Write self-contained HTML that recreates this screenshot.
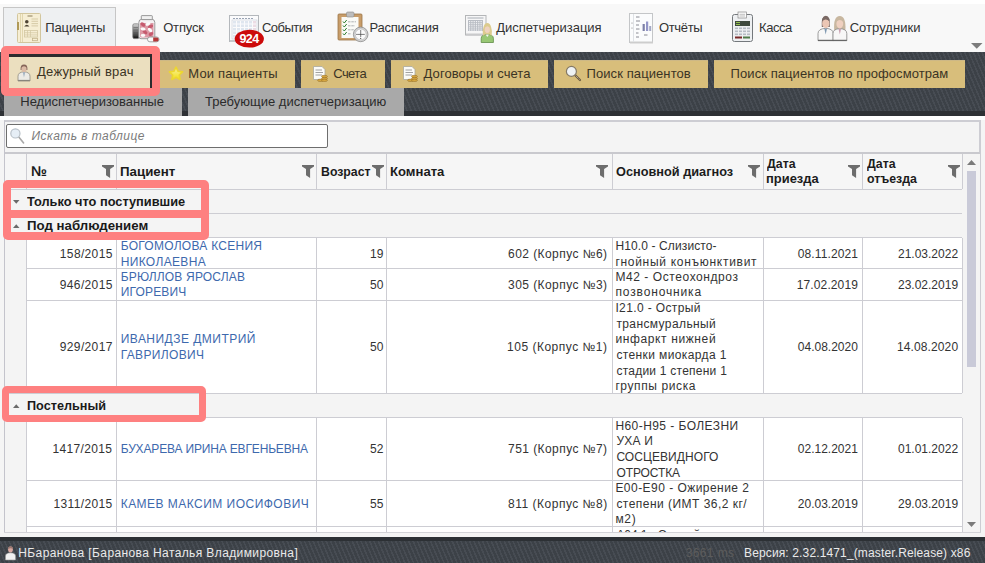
<!DOCTYPE html>
<html><head><meta charset="utf-8">
<style>
*{box-sizing:border-box;margin:0;padding:0}
html,body{width:985px;height:563px;overflow:hidden;background:#fff;font-family:"Liberation Sans",sans-serif;color:#333}
.a{position:absolute}
.t{position:absolute;white-space:nowrap;font-family:"Liberation Sans",sans-serif}
.stripes{background:repeating-linear-gradient(67deg,#474c53 0px,#474c53 1.6px,#3c4147 1.6px,#3c4147 4px)}
.btn{position:absolute;top:60px;height:28px;background:#d8be7b;border-top:1px solid #cdb886}
.gt{position:absolute;top:88px;height:28px;background:#a9a9a9}
.hl{position:absolute;height:1px;background:#cdcdd3}
.vl{position:absolute;width:1px;background:#cdcdd3}
.pink{position:absolute;border:8px solid #fe8080;border-radius:5px}
.fun{position:absolute}
</style></head><body>
<svg width="0" height="0" style="position:absolute">
<defs>
<symbol id="funnel" viewBox="0 0 13 14"><path d="M0,0H12V1.6L8.1,4.1V13.1L4,10.2V4.1L0,1.6Z" fill="#6d6d6d"/></symbol>
<linearGradient id="capg" x1="0" y1="0" x2="0" y2="1"><stop offset="0" stop-color="#d8d8d8"/><stop offset="1" stop-color="#111"/></linearGradient>
<linearGradient id="stardg" x1="0" y1="0" x2="0" y2="1"><stop offset="0" stop-color="#f8f0a0"/><stop offset="1" stop-color="#f2e018"/></linearGradient>
</defs>
</svg>

<!-- ============ TOP TOOLBAR ============ -->
<div class="a" style="left:0;top:0;width:985px;height:52px;background:#f8f8f8;border-top:4px solid #fff"></div>
<div class="a" style="left:3px;top:7px;width:113px;height:45px;background:#eef0f2;border:1px solid #c6c6c6;border-bottom:none"></div>

<!-- patients icon -->
<svg class="a" style="left:17px;top:13px" width="24" height="30" viewBox="0 0 24 30">
<rect x="0.5" y="0.5" width="23" height="29" rx="1" fill="#f6eed4" stroke="#d2c69e"/>
<path d="M3.5 1V29M5.5 1V29" stroke="#dccfa4" stroke-width="0.8"/>
<rect x="0" y="9" width="2" height="8" fill="#b09a58"/>
<rect x="10.5" y="2.5" width="5" height="1" fill="#8a7c5a"/>
<circle cx="9.8" cy="8.8" r="1.8" fill="#4e4434"/>
<path d="M7.2 13.6Q9.8 9.8 12.4 13.6Z" fill="#4e4434"/>
<path d="M14.5 6H21M14.5 8.3H21M14.5 10.6H21M14.5 12.9H21" stroke="#c9bb94" stroke-width="0.7"/>
<rect x="7.5" y="17.5" width="13" height="6.5" fill="none" stroke="#d3c7a2" stroke-width="0.8"/>
<path d="M7.5 19.7H20.5M7.5 21.9H20.5M10.5 17.5V24M13.5 17.5V24" stroke="#d3c7a2" stroke-width="0.7"/>
<rect x="15.5" y="25.3" width="5" height="2.4" fill="none" stroke="#c2b48c" stroke-width="0.8"/>
</svg>

<!-- pills icon -->
<svg class="a" style="left:132px;top:15px" width="28" height="28" viewBox="0 0 28 28">
<rect x="0.8" y="8.8" width="6.2" height="14.8" rx="1.5" fill="url(#capg)" stroke="#777" stroke-width="0.7"/>
<path d="M1.5 12.5H6.3M1.5 15H6.3M1.5 17.5H6.3M1.5 20H6.3" stroke="#555" stroke-width="0.5"/>
<path d="M6.8 7.5Q6.8 4.2 10 4.2H19.5Q22.8 4.2 22.8 7.5V21.5Q22.8 23.7 20.5 23.7H9Q6.8 23.7 6.8 21.5Z" fill="#f5f0f2" stroke="#8e8e8e" stroke-width="0.9"/>
<rect x="9.3" y="0.6" width="11" height="4" rx="0.6" fill="#f0f0f0" stroke="#8e8e8e" stroke-width="0.9"/>
<path d="M8 8H21.5V21Q21.5 22.5 20 22.5H9.5Q8 22.5 8 21Z" fill="#dc9aa6"/>
<g fill="#c65a6e"><ellipse cx="11" cy="9.5" rx="2.8" ry="1.7" transform="rotate(35 11 9.5)"/><ellipse cx="18.5" cy="11.5" rx="2.8" ry="1.7" transform="rotate(-25 18.5 11.5)"/><ellipse cx="13" cy="17" rx="2.8" ry="1.7" transform="rotate(40 13 17)"/><ellipse cx="19" cy="19" rx="2.5" ry="1.6" transform="rotate(-30 19 19)"/></g>
<g fill="#fbfbfb"><ellipse cx="16" cy="9" rx="2.6" ry="1.5" transform="rotate(-20 16 9)"/><ellipse cx="11" cy="14" rx="2.6" ry="1.5" transform="rotate(10 11 14)"/><ellipse cx="18" cy="15" rx="2.6" ry="1.5" transform="rotate(40 18 15)"/><ellipse cx="11" cy="20.5" rx="2.3" ry="1.4"/></g>
<rect x="15.5" y="22" width="11.5" height="4.8" rx="2.4" fill="#fafafa" stroke="#8c8c8c" stroke-width="0.8"/>
<path d="M21.2 22.4H24.6A2 2 0 0 1 24.6 26.4H21.2Z" fill="#b23838"/>
</svg>

<!-- events calendar + badge -->
<svg class="a" style="left:229px;top:15px" width="36" height="33" viewBox="0 0 36 33">
<rect x="0.5" y="0.5" width="29" height="26" fill="#fbfbfc" stroke="#b4b8bc"/>
<rect x="1" y="25" width="28" height="2" fill="#c6c8ca"/>
<path d="M4 3.5H25" stroke="#9aa4b4" stroke-width="1" stroke-dasharray="2 1"/>
<g fill="#dfe6ef">
<rect x="4" y="6" width="3" height="2.5"/><rect x="8" y="6" width="3" height="2.5"/><rect x="12" y="6" width="3" height="2.5"/><rect x="16" y="6" width="3" height="2.5"/><rect x="20" y="6" width="3" height="2.5"/><rect x="24" y="6" width="3" height="2.5" fill="#ecdce4"/>
<rect x="4" y="9.5" width="3" height="2.5"/><rect x="8" y="9.5" width="3" height="2.5"/><rect x="12" y="9.5" width="3" height="2.5"/><rect x="16" y="9.5" width="3" height="2.5"/><rect x="20" y="9.5" width="3" height="2.5"/><rect x="24" y="9.5" width="3" height="2.5" fill="#ecdce4"/>
<rect x="4" y="13" width="3" height="2.5"/><rect x="8" y="13" width="3" height="2.5"/><rect x="12" y="13" width="3" height="2.5"/><rect x="16" y="13" width="3" height="2.5"/><rect x="20" y="13" width="3" height="2.5"/><rect x="24" y="13" width="3" height="2.5" fill="#ecdce4"/>
<rect x="4" y="16.5" width="3" height="2.5"/><rect x="8" y="16.5" width="3" height="2.5"/>
<rect x="4" y="20" width="3" height="2.5"/>
</g>
<rect x="3" y="5" width="25" height="19" fill="none" stroke="#c7ced8" stroke-width="0.6"/>
<ellipse cx="20.3" cy="23.7" rx="14.6" ry="8.9" fill="#cc0a0a"/>
</svg>
<div class="t" style="left:239.5px;top:33px;font-size:12.5px;line-height:13px;color:#fff;font-weight:bold;letter-spacing:-0.6px">924</div>

<!-- schedule clipboard -->
<svg class="a" style="left:337px;top:11px" width="33" height="32" viewBox="0 0 33 32">
<rect x="1" y="3" width="24" height="26" rx="1" fill="#c89d6a" stroke="#9a7448" stroke-width="0.8"/>
<rect x="4.5" y="6" width="17" height="21" fill="#fafaf6"/>
<rect x="9.5" y="1" width="7.5" height="5" rx="1.2" fill="#bdbdbd" stroke="#8a8a8a" stroke-width="0.6"/>
<path d="M6 10.5l1.3 1.5 2.4-3M6 14.5l1.3 1.5 2.4-3M6 18.5l1.3 1.5 2.4-3M6 22.5l1.3 1.5 2.4-3" stroke="#2e7d2e" stroke-width="1" fill="none"/>
<path d="M11 10.8H19M11 14.8H18M11 18.8H17M11 22.8H14" stroke="#8e9296" stroke-width="0.7" stroke-dasharray="2.5 0.8"/>
<circle cx="23.7" cy="23.4" r="7.3" fill="#d2d2d2" stroke="#8c8c8c" stroke-width="0.8"/>
<circle cx="23.7" cy="23.4" r="5.4" fill="#fbfbfb" stroke="#aaa" stroke-width="0.5"/>
<path d="M23.7 19V26M21 23.4H27.8" stroke="#444" stroke-width="0.7" fill="none"/><circle cx="20" cy="23.4" r="0.6" fill="#333"/><circle cx="23.7" cy="27.3" r="0.6" fill="#333"/>
</svg>

<!-- dispatch -->
<svg class="a" style="left:464px;top:14px" width="31" height="30" viewBox="0 0 31 30">
<rect x="1.5" y="1.5" width="20.5" height="19.5" fill="#f6f6f7" stroke="#b4b6b8"/>
<rect x="2" y="19.5" width="20" height="2" fill="#c9cacc"/>
<rect x="3.5" y="3" width="16" height="2" fill="#cfd2d6"/>
<rect x="4" y="6" width="15" height="11" fill="#b9bdc4"/>
<g fill="#f4f5f7"><rect x="5.0" y="7.0" width="1.2" height="1.2"/><rect x="7.3" y="7.0" width="1.2" height="1.2"/><rect x="9.6" y="7.0" width="1.2" height="1.2"/><rect x="11.9" y="7.0" width="1.2" height="1.2"/><rect x="14.2" y="7.0" width="1.2" height="1.2"/><rect x="16.5" y="7.0" width="1.2" height="1.2"/><rect x="5.0" y="9.1" width="1.2" height="1.2"/><rect x="7.3" y="9.1" width="1.2" height="1.2"/><rect x="9.6" y="9.1" width="1.2" height="1.2"/><rect x="11.9" y="9.1" width="1.2" height="1.2"/><rect x="14.2" y="9.1" width="1.2" height="1.2"/><rect x="16.5" y="9.1" width="1.2" height="1.2"/><rect x="5.0" y="11.2" width="1.2" height="1.2"/><rect x="7.3" y="11.2" width="1.2" height="1.2"/><rect x="9.6" y="11.2" width="1.2" height="1.2"/><rect x="11.9" y="11.2" width="1.2" height="1.2"/><rect x="14.2" y="11.2" width="1.2" height="1.2"/><rect x="16.5" y="11.2" width="1.2" height="1.2"/><rect x="5.0" y="13.3" width="1.2" height="1.2"/><rect x="7.3" y="13.3" width="1.2" height="1.2"/><rect x="9.6" y="13.3" width="1.2" height="1.2"/><rect x="11.9" y="13.3" width="1.2" height="1.2"/><rect x="14.2" y="13.3" width="1.2" height="1.2"/><rect x="16.5" y="13.3" width="1.2" height="1.2"/><rect x="5.0" y="15.4" width="1.2" height="1.2"/><rect x="7.3" y="15.4" width="1.2" height="1.2"/><rect x="9.6" y="15.4" width="1.2" height="1.2"/><rect x="11.9" y="15.4" width="1.2" height="1.2"/><rect x="14.2" y="15.4" width="1.2" height="1.2"/><rect x="16.5" y="15.4" width="1.2" height="1.2"/></g>
<path d="M17.2 28.5V24.5Q17.2 20.5 23.3 20.3Q29.4 20.5 29.4 24.5V28.5Z" fill="#98c774" stroke="#5f8c48" stroke-width="0.8"/>
<path d="M21.6 20.5L23.3 23L25 20.5Z" fill="#f4f4f0"/>
<path d="M19 22Q18 17 19.5 13Q20.5 9 23.3 9Q26.1 9 27.1 13Q28.6 17 27.6 22Q26 20 23.3 20Q20.6 20 19 22Z" fill="#dccb8e"/>
<ellipse cx="23.3" cy="15.6" rx="2.6" ry="3.4" fill="#efd2be"/>
<path d="M20.6 13.5Q23.3 10.5 26 13.5Q25.5 10.2 23.3 10.2Q21.1 10.2 20.6 13.5Z" fill="#dccb8e"/>
</svg>

<!-- reports -->
<svg class="a" style="left:629px;top:13px" width="24" height="31" viewBox="0 0 24 31">
<rect x="0.5" y="0.5" width="23" height="29" fill="#fbfcfd" stroke="#c4c6c8"/>
<rect x="1" y="28.5" width="23" height="2" fill="#cdcdcd"/>
<path d="M4.5 1V29" stroke="#dfe2e6"/>
<path d="M7 4H10.5M7 8H11M7 12H10M7 16H10.5M7 20H9.5M7 24H10M15 22H18.5" stroke="#6f7078" stroke-width="0.8"/>
<circle cx="3" cy="10" r="0.5" fill="#666"/><circle cx="3" cy="15" r="0.5" fill="#666"/>
<rect x="13.6" y="11" width="2.2" height="7" fill="#7d80a8"/>
<rect x="17" y="8.5" width="2.2" height="9.5" fill="#9396c8"/>
<rect x="20.2" y="13" width="2" height="5" fill="#a4a8c4"/>
</svg>

<!-- cash register -->
<svg class="a" style="left:731px;top:11px" width="23" height="32" viewBox="0 0 23 32">
<rect x="1.5" y="3.5" width="20" height="27" rx="2" fill="#eef0f2" stroke="#74787c"/>
<rect x="7" y="1" width="8.5" height="6" fill="#fbfbfb" stroke="#888" stroke-width="0.7"/>
<path d="M8.5 3.3H14M8.5 5H14" stroke="#999" stroke-width="0.6"/>
<rect x="4" y="10" width="15" height="5" fill="#3f4a3e"/>
<path d="M5 11.5H9M5 13.5H9" stroke="#9ccc50" stroke-width="0.9"/>
<g fill="#b6bcc4"><rect x="4" y="16.5" width="3" height="1.6"/><rect x="8" y="16.5" width="3" height="1.6"/><rect x="12" y="16.5" width="3" height="1.6"/><rect x="16" y="16.5" width="3" height="1.6"/>
<rect x="4" y="19.5" width="3" height="1.6"/><rect x="8" y="19.5" width="3" height="1.6"/><rect x="12" y="19.5" width="3" height="1.6"/><rect x="16" y="19.5" width="3" height="1.6"/>
<rect x="4" y="22.5" width="3" height="1.6"/><rect x="8" y="22.5" width="3" height="1.6"/><rect x="12" y="22.5" width="3" height="1.6"/><rect x="16" y="22.5" width="3" height="1.6"/></g>
<rect x="4" y="25.5" width="7" height="2" fill="#7a2a2a"/>
<rect x="12" y="25.5" width="7" height="2" fill="#4f7a4a"/>
</svg>

<!-- staff -->
<svg class="a" style="left:817px;top:15px" width="31" height="27" viewBox="0 0 31 27">
<path d="M17.2 15.5Q16.2 1 22.7 1Q29.2 1 28.4 15.5Z" fill="#c8b7a0"/>
<path d="M1 25.7V18.5Q1 13.8 8.8 13.3Q16.2 13.8 16.2 18.5V25.7Z" fill="#f7f7f7" stroke="#858585" stroke-width="0.8"/>
<path d="M16 25.7V18.5Q16 14 22.8 13.6Q29.8 14 29.8 18.5V25.7Z" fill="#f7f7f7" stroke="#858585" stroke-width="0.8"/>
<path d="M1 25.3H29.8" stroke="#555" stroke-width="1"/>
<path d="M7.3 13.6L8.7 19.5L10 13.6Z" fill="#7d97b0"/>
<path d="M21.5 13.8L22.8 19.5L24.1 13.8Z" fill="#c9a0b0"/>
<path d="M4.8 12Q4 0.8 8.8 0.8Q13.6 0.8 12.8 12Z" fill="#7a6964"/>
<ellipse cx="8.8" cy="8.4" rx="3.6" ry="4.9" fill="#ebc6b4"/>
<path d="M5.2 6.2Q8.8 2.8 12.4 6.2Q12.4 1.6 8.8 1.6Q5.2 1.6 5.2 6.2Z" fill="#7a6964"/>
<ellipse cx="22.8" cy="8.7" rx="3.4" ry="4.8" fill="#efd0c0"/>
<path d="M19.2 7Q22.8 3.2 26.4 7Q26.4 1.8 22.8 1.8Q19.2 1.8 19.2 7Z" fill="#c8b7a0"/>
</svg>
<div class="a" style="left:0;top:42px;width:985px;height:0"></div>
<svg class="a" style="left:971px;top:43px" width="12" height="6" viewBox="0 0 12 6"><path d="M0,0H11.5L5.75,5.8Z" fill="#7c7c7c"/></svg>

<!-- ============ DARK BAR ============ -->
<div class="a stripes" style="left:0;top:52px;width:985px;height:64px"></div>
<div class="a" style="left:0;top:111px;width:985px;height:5px;background:#2e3135"></div>

<div class="a" style="left:9px;top:54px;width:143px;height:34px;background:#2b2c2e"></div>
<div class="a" style="left:9px;top:57px;width:141px;height:31px;background:#ebdfbf"></div>
<div class="btn" style="left:156px;width:139px"></div>
<div class="btn" style="left:301px;width:84px"></div>
<div class="btn" style="left:391px;width:157px"></div>
<div class="btn" style="left:554px;width:154px"></div>
<div class="btn" style="left:714px;width:251px"></div>

<!-- doctor icon -->
<svg class="a" style="left:17px;top:64px" width="14" height="18" viewBox="0 0 14 18">
<path d="M1 17V12.2Q1 8.2 7 7.8Q13 8.2 13 12.2V17Z" fill="#ecebe6" stroke="#8f8c82" stroke-width="0.8"/>
<path d="M1.2 16.4H12.8" stroke="#77746c" stroke-width="0.9"/>
<path d="M6.1 8.2L7 13.5L7.9 8.2Z" fill="#8aa0b8"/>
<path d="M3.6 6Q3.2 0.6 7 0.6Q10.8 0.6 10.4 6Z" fill="#86665a"/>
<ellipse cx="7" cy="5" rx="2.6" ry="3.1" fill="#dcbba6"/>
<path d="M4 3.6Q7 0.9 10 3.6Q9.8 1.1 7 1.1Q4.2 1.1 4 3.6Z" fill="#86665a"/>
</svg>
<!-- star -->
<svg class="a" style="left:168px;top:66px" width="16" height="15" viewBox="0 0 16 15">
<path d="M8 1.2L10.1 5.3L14.6 5.9L11.3 9L12.1 13.5L8 11.4L3.9 13.5L4.7 9L1.4 5.9L5.9 5.3Z" fill="url(#stardg)" stroke="#ecd630" stroke-width="1.6" stroke-linejoin="round"/>
</svg>
<!-- doc + coins icons -->
<svg class="a" style="left:313px;top:66px" width="15" height="16" viewBox="0 0 15 16">
<path d="M0.5 0.5H9L12 3.5V13.5H0.5Z" fill="#fbfbf8" stroke="#a8a8a0" stroke-width="0.8"/>
<path d="M2.5 4H9M2.5 6.5H10M2.5 9H9" stroke="#8c8c8c" stroke-width="0.8"/>
<g fill="#d9a840" stroke="#8a6420" stroke-width="0.5"><ellipse cx="11.5" cy="10.5" rx="3" ry="1.2"/><ellipse cx="11.5" cy="12.5" rx="3" ry="1.2"/><ellipse cx="7.5" cy="14.3" rx="3" ry="1.2"/><ellipse cx="11.5" cy="14.3" rx="3" ry="1.2"/></g>
</svg>
<svg class="a" style="left:403px;top:66px" width="15" height="16" viewBox="0 0 15 16">
<path d="M0.5 0.5H9L12 3.5V13.5H0.5Z" fill="#fbfbf8" stroke="#a8a8a0" stroke-width="0.8"/>
<path d="M2.5 4H9M2.5 6.5H10M2.5 9H9" stroke="#8c8c8c" stroke-width="0.8"/>
<g fill="#d9a840" stroke="#8a6420" stroke-width="0.5"><ellipse cx="11.5" cy="10.5" rx="3" ry="1.2"/><ellipse cx="11.5" cy="12.5" rx="3" ry="1.2"/><ellipse cx="7.5" cy="14.3" rx="3" ry="1.2"/><ellipse cx="11.5" cy="14.3" rx="3" ry="1.2"/></g>
</svg>
<!-- magnifier -->
<svg class="a" style="left:565px;top:65px" width="18" height="18" viewBox="0 0 18 18">
<path d="M9.5 9.5L15 15" stroke="#6a5a40" stroke-width="2.2" stroke-linecap="round"/>
<path d="M9.5 9.5L15 15" stroke="#e8e0d0" stroke-width="0.8" stroke-dasharray="1 1"/>
<circle cx="6.4" cy="6.4" r="5" fill="#eef2f4" stroke="#857a66" stroke-width="1.2"/>
</svg>

<div class="gt" style="left:4px;width:178px"></div>
<div class="gt" style="left:188px;width:216px"></div>

<!-- ============ PANEL ============ -->
<div class="a" style="left:0;top:120px;width:985px;height:417px;background:#f5f5f5"></div>
<div class="a" style="left:4px;top:120px;width:977px;height:413px;background:#f4f4f4;border:1px solid #c4c4cc;border-top:2px solid #cdcdd3;border-right:2px solid #cdcdd3"></div>
<div class="a" style="left:6px;top:124px;width:322px;height:24px;background:#fff;border:1px solid #6e6e6e;border-radius:2px"></div>
<svg class="a" style="left:9px;top:127px" width="17" height="18" viewBox="0 0 17 18">
<path d="M9.8 10L14.6 16" stroke="#a9a9a9" stroke-width="1.6" stroke-linecap="round"/>
<circle cx="6.4" cy="6.4" r="4.6" fill="#e6eef6" stroke="#b8c0c8" stroke-width="1.2"/>
</svg>

<!-- header -->
<div class="a" style="left:5px;top:152px;width:975px;height:2px;background:#c9c9ce"></div>
<div class="a" style="left:5px;top:154px;width:957px;height:35px;background:#f6f6f6"></div>
<div class="hl" style="left:5px;top:189px;width:957px"></div>
<!-- group rows -->
<div class="a" style="left:5px;top:190px;width:957px;height:47px;background:#f4f4f4"></div>
<div class="hl" style="left:5px;top:213px;width:957px"></div>
<div class="hl" style="left:5px;top:237px;width:957px"></div>
<!-- data block 1 -->
<div class="a" style="left:27px;top:238px;width:935px;height:155px;background:#fff"></div>
<div class="hl" style="left:26px;top:268px;width:936px"></div>
<div class="hl" style="left:26px;top:300px;width:936px"></div>
<div class="hl" style="left:5px;top:393px;width:957px"></div>
<div class="hl" style="left:5px;top:417px;width:957px"></div>
<!-- data block 2 -->
<div class="a" style="left:27px;top:418px;width:935px;height:114px;background:#fff"></div>
<div class="hl" style="left:26px;top:480px;width:936px"></div>
<div class="hl" style="left:26px;top:526px;width:936px"></div>

<!-- vertical lines: header -->
<div class="vl" style="left:26px;top:154px;height:35px"></div>
<div class="vl" style="left:116px;top:154px;height:35px"></div>
<div class="vl" style="left:316px;top:154px;height:35px"></div>
<div class="vl" style="left:386px;top:154px;height:35px"></div>
<div class="vl" style="left:612px;top:154px;height:35px"></div>
<div class="vl" style="left:763px;top:154px;height:35px"></div>
<div class="vl" style="left:862px;top:154px;height:35px"></div>
<div class="vl" style="left:962px;top:154px;height:35px"></div><div class="vl" style="left:962px;top:238px;height:155px"></div><div class="vl" style="left:962px;top:418px;height:114px"></div>
<!-- vertical lines: block1 -->
<div class="vl" style="left:26px;top:238px;height:155px"></div>
<div class="vl" style="left:116px;top:238px;height:155px"></div>
<div class="vl" style="left:316px;top:238px;height:155px"></div>
<div class="vl" style="left:386px;top:238px;height:155px"></div>
<div class="vl" style="left:612px;top:238px;height:155px"></div>
<div class="vl" style="left:763px;top:238px;height:155px"></div>
<div class="vl" style="left:862px;top:238px;height:155px"></div>
<!-- vertical lines: block2 -->
<div class="vl" style="left:26px;top:418px;height:114px"></div>
<div class="vl" style="left:116px;top:418px;height:114px"></div>
<div class="vl" style="left:316px;top:418px;height:114px"></div>
<div class="vl" style="left:386px;top:418px;height:114px"></div>
<div class="vl" style="left:612px;top:418px;height:114px"></div>
<div class="vl" style="left:763px;top:418px;height:114px"></div>
<div class="vl" style="left:862px;top:418px;height:114px"></div>

<!-- funnels -->
<svg class="fun" style="left:102px;top:165px" width="13" height="14"><use href="#funnel"/></svg>
<svg class="fun" style="left:302px;top:165px" width="13" height="14"><use href="#funnel"/></svg>
<svg class="fun" style="left:371.5px;top:165px" width="13" height="14"><use href="#funnel"/></svg>
<svg class="fun" style="left:596px;top:165px" width="13" height="14"><use href="#funnel"/></svg>
<svg class="fun" style="left:748px;top:165px" width="13" height="14"><use href="#funnel"/></svg>
<svg class="fun" style="left:848px;top:165px" width="13" height="14"><use href="#funnel"/></svg>
<svg class="fun" style="left:948px;top:165px" width="13" height="14"><use href="#funnel"/></svg>

<!-- group triangles -->
<svg class="a" style="left:13px;top:200px" width="7" height="4"><path d="M0,0H6.5L3.25,3.8Z" fill="#6a6a6a"/></svg>
<svg class="a" style="left:13px;top:224px" width="7" height="4"><path d="M0,4H6.5L3.25,0.2Z" fill="#6a6a6a"/></svg>
<svg class="a" style="left:13px;top:404px" width="7" height="4"><path d="M0,4H6.5L3.25,0.2Z" fill="#6a6a6a"/></svg>

<!-- scrollbar -->
<div class="a" style="left:963px;top:154px;width:17px;height:378px;background:#f4f4f4"></div>
<svg class="a" style="left:967px;top:160px" width="9" height="5"><path d="M0,5H9L4.5,0Z" fill="#7a7a7a"/></svg>
<div class="a" style="left:967px;top:171px;width:9px;height:196px;background:#c9cad8"></div>
<svg class="a" style="left:967px;top:522px" width="9" height="5"><path d="M0,0H9L4.5,5Z" fill="#7a7a7a"/></svg>

<div class="t" style="left:45.30px;top:21px;font-size:13px;line-height:13px;color:#333;letter-spacing:-0.143px">Пациенты</div>
<div class="t" style="left:163.20px;top:21px;font-size:13px;line-height:13px;color:#333;letter-spacing:-0.180px">Отпуск</div>
<div class="t" style="left:261.90px;top:21px;font-size:13px;line-height:13px;color:#333;letter-spacing:-0.483px">События</div>
<div class="t" style="left:369.60px;top:21px;font-size:13px;line-height:13px;color:#333;letter-spacing:-0.256px">Расписания</div>
<div class="t" style="left:496.30px;top:21px;font-size:13px;line-height:13px;color:#333;letter-spacing:-0.036px">Диспетчеризация</div>
<div class="t" style="left:658.90px;top:21px;font-size:13px;line-height:13px;color:#333;letter-spacing:-0.320px">Отчёты</div>
<div class="t" style="left:759.00px;top:21px;font-size:13px;line-height:13px;color:#333;letter-spacing:-0.425px">Касса</div>
<div class="t" style="left:849.70px;top:21px;font-size:13px;line-height:13px;color:#333;letter-spacing:0.044px">Сотрудники</div>
<div class="t" style="left:37.00px;top:65px;font-size:13px;line-height:13px;color:#3b3424;letter-spacing:0.250px">Дежурный врач</div>
<div class="t" style="left:188.30px;top:67px;font-size:13px;line-height:13px;color:#3b3424;letter-spacing:0.145px">Мои пациенты</div>
<div class="t" style="left:333.20px;top:67px;font-size:13px;line-height:13px;color:#3b3424;letter-spacing:-0.550px">Счета</div>
<div class="t" style="left:423.60px;top:67px;font-size:13px;line-height:13px;color:#3b3424;letter-spacing:0.067px">Договоры и счета</div>
<div class="t" style="left:586.50px;top:67px;font-size:13px;line-height:13px;color:#3b3424;letter-spacing:0.093px">Поиск пациентов</div>
<div class="t" style="left:730.60px;top:67px;font-size:13px;line-height:13px;color:#3b3424;letter-spacing:0.067px">Поиск пациентов по профосмотрам</div>
<div class="t" style="left:20.30px;top:95px;font-size:13px;line-height:13px;color:#2b2b2b;letter-spacing:-0.016px">Недиспетчеризованные</div>
<div class="t" style="left:205.00px;top:95px;font-size:13px;line-height:13px;color:#2b2b2b;letter-spacing:0.013px">Требующие диспетчеризацию</div>
<div class="t" style="left:31.60px;top:130px;font-size:12px;line-height:12px;color:#7b7b7b;font-style:italic;letter-spacing:0.440px">Искать в таблице</div>
<div class="t" style="left:30.68px;top:164px;font-size:14px;line-height:14px;color:#1c1c1c;font-weight:700;transform:scaleX(1.0214);transform-origin:0 0">№</div>
<div class="t" style="left:120.31px;top:165px;font-size:13.5px;line-height:13.5px;color:#1c1c1c;font-weight:700;transform:scaleX(0.9855);transform-origin:0 0">Пациент</div>
<div class="t" style="left:320.99px;top:165px;font-size:13.5px;line-height:13.5px;color:#1c1c1c;font-weight:700;transform:scaleX(0.9113);transform-origin:0 0">Возраст</div>
<div class="t" style="left:390.23px;top:165px;font-size:13.5px;line-height:13.5px;color:#1c1c1c;font-weight:700;transform:scaleX(0.9691);transform-origin:0 0">Комната</div>
<div class="t" style="left:616.40px;top:165px;font-size:13.5px;line-height:13.5px;color:#1c1c1c;font-weight:700;transform:scaleX(0.9435);transform-origin:0 0">Основной диагноз</div>
<div class="t" style="left:767.30px;top:157px;font-size:13.5px;line-height:13.5px;color:#1c1c1c;font-weight:700;transform:scaleX(0.9125);transform-origin:0 0">Дата</div>
<div class="t" style="left:766.34px;top:172px;font-size:13.5px;line-height:13.5px;color:#1c1c1c;font-weight:700;transform:scaleX(0.9574);transform-origin:0 0">приезда</div>
<div class="t" style="left:867.30px;top:157px;font-size:13.5px;line-height:13.5px;color:#1c1c1c;font-weight:700;transform:scaleX(0.9125);transform-origin:0 0">Дата</div>
<div class="t" style="left:867.30px;top:172px;font-size:13.5px;line-height:13.5px;color:#1c1c1c;font-weight:700;transform:scaleX(0.9127);transform-origin:0 0">отъезда</div>
<div class="t" style="left:27.00px;top:195px;font-size:13px;line-height:13px;color:#1a1a1a;font-weight:700;transform:scaleX(0.9832);transform-origin:0 0">Только что поступившие</div>
<div class="t" style="left:26.68px;top:219px;font-size:13px;line-height:13px;color:#1a1a1a;font-weight:700;transform:scaleX(1.0188);transform-origin:0 0">Под наблюдением</div>
<div class="t" style="left:26.83px;top:399px;font-size:13px;line-height:13px;color:#1a1a1a;font-weight:700;transform:scaleX(0.9738);transform-origin:0 0">Постельный</div>
<div class="t" style="left:59.85px;top:248px;font-size:12px;line-height:12px;color:#333;letter-spacing:0.350px">158/2015</div>
<div class="t" style="left:120.70px;top:240px;font-size:12px;line-height:12px;color:#3d69ad;letter-spacing:0.262px">БОГОМОЛОВА КСЕНИЯ</div>
<div class="t" style="left:120.70px;top:256px;font-size:12px;line-height:12px;color:#3d69ad;letter-spacing:0.344px">НИКОЛАЕВНА</div>
<div class="t" style="left:370.00px;top:248px;font-size:12px;line-height:12px;color:#333">19</div>
<div class="t" style="left:508.10px;top:248px;font-size:12px;line-height:12px;color:#333;letter-spacing:0.429px">602 (Корпус №6)</div>
<div class="t" style="left:615.40px;top:240px;font-size:12px;line-height:12px;color:#333;letter-spacing:0.119px">H10.0 - Слизисто-</div>
<div class="t" style="left:615.40px;top:256px;font-size:12px;line-height:12px;color:#333;letter-spacing:0.711px">гнойный конъюнктивит</div>
<div class="t" style="left:797.80px;top:248px;font-size:12px;line-height:12px;color:#333;letter-spacing:0.111px">08.11.2021</div>
<div class="t" style="left:898.00px;top:248px;font-size:12px;line-height:12px;color:#333">21.03.2022</div>
<div class="t" style="left:59.80px;top:279px;font-size:12px;line-height:12px;color:#333;letter-spacing:0.357px">946/2015</div>
<div class="t" style="left:120.70px;top:271px;font-size:12px;line-height:12px;color:#3d69ad;letter-spacing:0.186px">БРЮЛЛОВ ЯРОСЛАВ</div>
<div class="t" style="left:120.70px;top:286px;font-size:12px;line-height:12px;color:#3d69ad;letter-spacing:0.171px">ИГОРЕВИЧ</div>
<div class="t" style="left:370.00px;top:279px;font-size:12px;line-height:12px;color:#333">50</div>
<div class="t" style="left:508.10px;top:279px;font-size:12px;line-height:12px;color:#333;letter-spacing:0.429px">305 (Корпус №3)</div>
<div class="t" style="left:615.40px;top:271px;font-size:12px;line-height:12px;color:#333;letter-spacing:0.576px">M42 - Остеохондроз</div>
<div class="t" style="left:615.40px;top:286px;font-size:12px;line-height:12px;color:#333;letter-spacing:0.864px">позвоночника</div>
<div class="t" style="left:796.80px;top:279px;font-size:12px;line-height:12px;color:#333;letter-spacing:0.111px">17.02.2019</div>
<div class="t" style="left:898.00px;top:279px;font-size:12px;line-height:12px;color:#333">23.02.2019</div>
<div class="t" style="left:59.80px;top:341px;font-size:12px;line-height:12px;color:#333;letter-spacing:0.357px">929/2017</div>
<div class="t" style="left:120.70px;top:333px;font-size:12px;line-height:12px;color:#3d69ad;letter-spacing:0.480px">ИВАНИДЗЕ ДМИТРИЙ</div>
<div class="t" style="left:120.70px;top:349px;font-size:12px;line-height:12px;color:#3d69ad;letter-spacing:0.356px">ГАВРИЛОВИЧ</div>
<div class="t" style="left:370.00px;top:341px;font-size:12px;line-height:12px;color:#333">50</div>
<div class="t" style="left:507.10px;top:341px;font-size:12px;line-height:12px;color:#333;letter-spacing:0.500px">105 (Корпус №1)</div>
<div class="t" style="left:615.40px;top:302px;font-size:12px;line-height:12px;color:#333;letter-spacing:0.377px">I21.0 - Острый</div>
<div class="t" style="left:616.40px;top:318px;font-size:12px;line-height:12px;color:#333;letter-spacing:0.392px">трансмуральный</div>
<div class="t" style="left:615.40px;top:333px;font-size:12px;line-height:12px;color:#333;letter-spacing:0.623px">инфаркт нижней</div>
<div class="t" style="left:616.40px;top:349px;font-size:12px;line-height:12px;color:#333;letter-spacing:0.381px">стенки миокарда 1</div>
<div class="t" style="left:616.40px;top:365px;font-size:12px;line-height:12px;color:#333;letter-spacing:0.241px">стадии 1 степени 1</div>
<div class="t" style="left:615.40px;top:380px;font-size:12px;line-height:12px;color:#333;letter-spacing:0.600px">группы риска</div>
<div class="t" style="left:797.80px;top:341px;font-size:12px;line-height:12px;color:#333">04.08.2020</div>
<div class="t" style="left:897.00px;top:341px;font-size:12px;line-height:12px;color:#333;letter-spacing:0.111px">14.08.2020</div>
<div class="t" style="left:52.50px;top:443px;font-size:12px;line-height:12px;color:#333;letter-spacing:0.350px">1417/2015</div>
<div class="t" style="left:120.70px;top:443px;font-size:12px;line-height:12px;color:#3d69ad;letter-spacing:-0.158px">БУХАРЕВА ИРИНА ЕВГЕНЬЕВНА</div>
<div class="t" style="left:370.00px;top:443px;font-size:12px;line-height:12px;color:#333">52</div>
<div class="t" style="left:508.10px;top:443px;font-size:12px;line-height:12px;color:#333;letter-spacing:0.429px">751 (Корпус №7)</div>
<div class="t" style="left:615.40px;top:420px;font-size:12px;line-height:12px;color:#333;letter-spacing:0.438px">H60-H95 - БОЛЕЗНИ</div>
<div class="t" style="left:616.40px;top:435px;font-size:12px;line-height:12px;color:#333;letter-spacing:0.200px">УХА И</div>
<div class="t" style="left:616.40px;top:451px;font-size:12px;line-height:12px;color:#333;letter-spacing:0.073px">СОСЦЕВИДНОГО</div>
<div class="t" style="left:616.40px;top:467px;font-size:12px;line-height:12px;color:#333;letter-spacing:-0.086px">ОТРОСТКА</div>
<div class="t" style="left:797.80px;top:443px;font-size:12px;line-height:12px;color:#333">02.12.2021</div>
<div class="t" style="left:898.00px;top:443px;font-size:12px;line-height:12px;color:#333">01.01.2022</div>
<div class="t" style="left:53.55px;top:498px;font-size:12px;line-height:12px;color:#333;letter-spacing:0.344px">1311/2015</div>
<div class="t" style="left:120.70px;top:498px;font-size:12px;line-height:12px;color:#3d69ad;letter-spacing:0.471px">КАМЕВ МАКСИМ ИОСИФОВИЧ</div>
<div class="t" style="left:370.00px;top:498px;font-size:12px;line-height:12px;color:#333">55</div>
<div class="t" style="left:508.10px;top:498px;font-size:12px;line-height:12px;color:#333;letter-spacing:0.500px">811 (Корпус №8)</div>
<div class="t" style="left:615.40px;top:482px;font-size:12px;line-height:12px;color:#333;letter-spacing:0.463px">E00-E90 - Ожирение 2</div>
<div class="t" style="left:616.40px;top:498px;font-size:12px;line-height:12px;color:#333;letter-spacing:0.470px">степени (ИМТ 36,2 кг/</div>
<div class="t" style="left:615.40px;top:513px;font-size:12px;line-height:12px;color:#333;letter-spacing:0.700px">м2)</div>
<div class="t" style="left:797.80px;top:498px;font-size:12px;line-height:12px;color:#333">20.03.2019</div>
<div class="t" style="left:898.00px;top:498px;font-size:12px;line-height:12px;color:#333">29.03.2019</div>
<div class="t" style="left:616.40px;top:529px;font-size:12px;line-height:12px;color:#333;letter-spacing:-0.077px;height:12px;clip-path:inset(0 0 9px 0)">A04.1 - Острый</div>

<!-- bottom strip & status -->
<div class="a" style="left:0;top:533px;width:985px;height:4px;background:#f4f4f4"></div>
<div class="a" style="left:4px;top:532px;width:977px;height:1px;background:#d3d3d8"></div>
<div class="a stripes" style="left:0;top:537px;width:985px;height:26px"></div>
<div class="a" style="left:0;top:537px;width:985px;height:4px;background:#2c3034"></div>
<svg class="a" style="left:5px;top:546px" width="11" height="15" viewBox="0 0 11 15">
<path d="M0.5 14V10Q0.5 7 5.5 6.8Q10.5 7 10.5 10V14Z" fill="#f0f0f0" stroke="#999" stroke-width="0.6"/>
<ellipse cx="5.5" cy="3.6" rx="2.4" ry="3" fill="#d8a8a0"/>
<path d="M3 3Q3 0.3 5.5 0.3Q8 0.3 8 3Q6 1.5 3 3Z" fill="#9a7870"/>
</svg>
<div class="t" style="left:18.30px;top:547px;font-size:12px;line-height:12px;color:#eaeaea;letter-spacing:0.392px">НБаранова [Баранова Наталья Владимировна]</div>
<div class="t" style="left:685.70px;top:547px;font-size:12px;line-height:12px;color:#5c5c5c;letter-spacing:0.383px">3661 ms</div>
<div class="t" style="left:744.00px;top:547px;font-size:12px;line-height:12px;color:#eaeaea;letter-spacing:0.135px">Версия: 2.32.1471_(master.Release) x86</div>

<!-- ============ PINK HIGHLIGHTS ============ -->
<div class="pink" style="left:1px;top:46px;width:159px;height:50px"></div>
<div class="pink" style="left:3px;top:180px;width:206px;height:38px"></div>
<div class="pink" style="left:3px;top:210px;width:206px;height:30px"></div>
<div class="pink" style="left:2px;top:386px;width:204px;height:36px;border-width:7.5px"></div>
</body></html>
